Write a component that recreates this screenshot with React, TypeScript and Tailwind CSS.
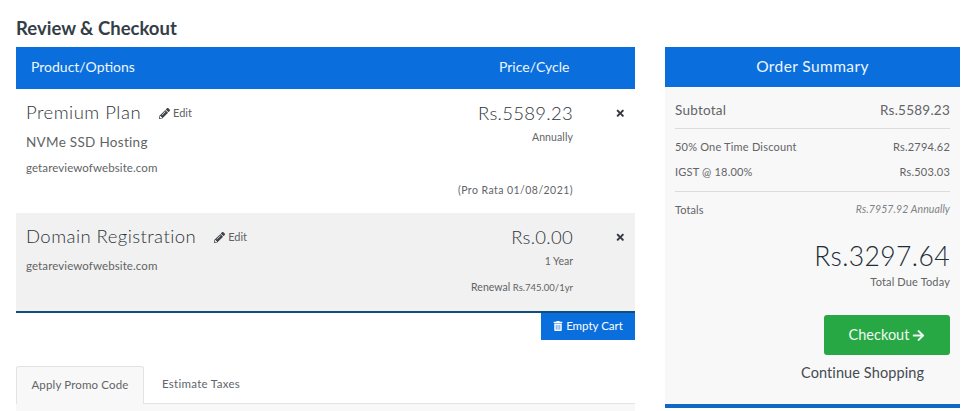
import { FaPencilAlt, FaTimes, FaTrashAlt, FaArrowRight } from "react-icons/fa";

function Edit({ className = "" }: { className?: string }) {
  return (
    <span className={`flex items-center gap-[3px] text-[11px] text-[#606265] ${className}`}>
      <FaPencilAlt className="text-[11px] text-[#3f444a]" />
      Edit
    </span>
  );
}

function Row({ label, value, className = "", valueClass = "" }: { label: string; value: string; className?: string; valueClass?: string }) {
  return (
    <div className={`flex justify-between items-center ${className}`}>
      <span>{label}</span>
      <span className={valueClass}>{value}</span>
    </div>
  );
}

export default function App() {
  return (
    <div className="w-[975px] h-[411px] overflow-hidden bg-white flex gap-[30px] pl-4 pt-[18px] font-['Lato','Noto_Sans',sans-serif] text-[#626466]">
      <div className="w-[619px]">
        <h1 className="h-[29px] text-[18.5px] leading-[21px] font-bold text-[#343e48]">Review &amp; Checkout</h1>
        <div className="h-[42px] pb-[3px] bg-[#0a6edd] text-[#eef6ff] text-[14px] flex items-center">
          <span className="pl-[15px] flex-1">Product/Options</span>
          <span className="w-[136px]">Price/Cycle</span>
        </div>

        <div className="h-[124px] flex pl-[10px] pt-[14px]">
          <div className="flex-1">
            <div className="flex items-center h-[20px]">
              <span className="text-[18.5px] font-light tracking-[0.5px] text-[#2e3439]">Premium Plan</span>
              <Edit className="ml-[18px]" />
            </div>
            <div className="mt-[10px] text-[13.5px] leading-[18px] tracking-[0.3px]">NVMe SSD Hosting</div>
            <div className="mt-[9px] text-[11.5px] leading-[16px] tracking-[0.1px]">getareviewofwebsite.com</div>
          </div>
          <div className="w-[140px] text-right">
            <div className="text-[18.5px] font-light leading-[20px] tracking-[0.3px] text-[#2e3439]">Rs.5589.23</div>
            <div className="mt-[6px] text-[10.5px] leading-[16px] tracking-[0.1px]">Annually</div>
            <div className="mt-[37px] text-[10.5px] leading-[16px] tracking-[0.45px]">(Pro Rata 01/08/2021)</div>
          </div>
          <div className="w-[62px] flex justify-end pr-[10px] pt-[5px]">
            <FaTimes className="text-[10.5px] text-[#343a40]" />
          </div>
        </div>

        <div className="h-[98px] flex pl-[10px] pt-[14px] bg-[#f1f1f1]">
          <div className="flex-1">
            <div className="flex items-center h-[20px]">
              <span className="text-[18.5px] font-light tracking-[0.45px] text-[#2e3439]">Domain Registration</span>
              <Edit className="ml-[18px]" />
            </div>
            <div className="mt-[11px] text-[11.5px] leading-[16px] tracking-[0.1px]">getareviewofwebsite.com</div>
          </div>
          <div className="w-[160px] text-right">
            <div className="text-[18.5px] font-light leading-[20px] tracking-[0.3px] text-[#2e3439]">Rs.0.00</div>
            <div className="mt-[6px] text-[10.5px] leading-[16px]">1 Year</div>
            <div className="mt-[10px] text-[10.5px] leading-[16px]">
              Renewal <span className="text-[9.5px]">Rs.745.00/1yr</span>
            </div>
          </div>
          <div className="w-[62px] flex justify-end pr-[10px] pt-[5px]">
            <FaTimes className="text-[10.5px] text-[#343a40]" />
          </div>
        </div>

        <div className="h-[2px] bg-[#0e4f7f]" />
        <div className="flex justify-end">
          <div className="w-[94px] h-[27px] pb-[2px] bg-[#0a6edd] text-white text-[11.5px] flex items-center justify-center gap-[3px]">
            <FaTrashAlt className="text-[10px]" />
            Empty Cart
          </div>
        </div>

        <div className="mt-[26px] h-[38px] flex border-b border-[#e3e3e3] text-[11.5px] tracking-[0.15px]">
          <div className="w-[128px] h-[38px] pb-[2px] bg-[#f8f8f8] border border-b-0 border-[#e3e3e3] rounded-t-[3px] flex items-center justify-center">Apply Promo Code</div>
          <div className="w-[112px] h-[37px] pb-[2px] flex items-center justify-center tracking-[0.3px] ml-[1px]">Estimate Taxes</div>
        </div>
        <div className="h-[8px] bg-[#f8f8f8]" />
      </div>

      <div className="w-[295px] h-[361px] mt-[29px] flex flex-col">
        <div className="h-[40px] bg-[#0a6edd] text-[#eef6ff] text-[15.5px] tracking-[0.4px] flex items-center justify-center shrink-0">Order Summary</div>
        <div className="h-[317px] bg-[#f8f8f9] px-[10px] flex flex-col shrink-0">
          <Row label="Subtotal" value="Rs.5589.23" className="mt-[3px] h-[39px] pt-[2px] text-[13.5px] tracking-[0.25px] border-b border-[#dcdcdc]" />
          <Row label="50% One Time Discount" value="Rs.2794.62" className="mt-[9px] h-[19px] text-[11px] tracking-[0.2px]" />
          <Row label="IGST @ 18.00%" value="Rs.503.03" className="mt-[6px] h-[19px] text-[11px] tracking-[0.2px]" />
          <div className="mt-[9px] border-t border-[#dcdcdc]" />
          <Row label="Totals" value="Rs.7957.92 Annually" className="mt-[9px] h-[18px] text-[11px] tracking-[0.1px]" valueClass="italic text-[10.5px] text-[#808284]" />
          <div className="mt-[18px] text-right text-[26.5px] font-light leading-[38px] tracking-[0.4px] text-[#222c35]">Rs.3297.64</div>
          <div className="text-right text-[11px] leading-[14px] tracking-[0.15px]">Total Due Today</div>
          <div className="mt-[26px] flex justify-end">
            <div className="w-[126px] h-[40px] rounded-[3px] bg-[#28a745] text-[#eefaf0] text-[14.5px] flex items-center justify-center gap-[3px]">
              Checkout
              <FaArrowRight className="text-[13px]" />
            </div>
          </div>
          <div className="mt-[8px] pl-[126px] text-[14.5px] leading-[20px] tracking-[0.1px] text-[#454b50] whitespace-nowrap">Continue Shopping</div>
        </div>
        <div className="h-[4px] bg-[#0f68c4] shrink-0" />
      </div>
    </div>
  );
}
